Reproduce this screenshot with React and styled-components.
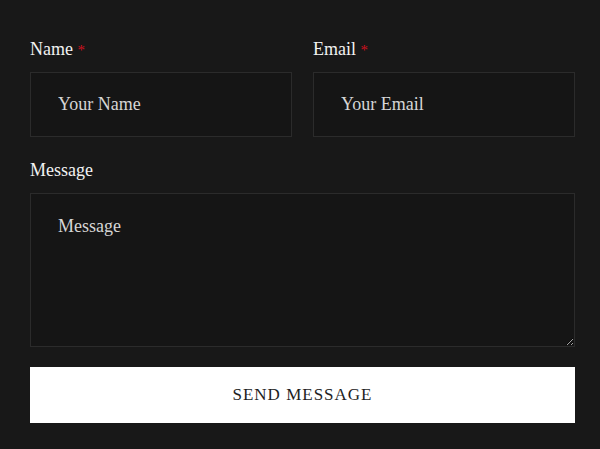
import React from 'react';
import styled, {createGlobalStyle} from 'styled-components';

const Global = createGlobalStyle`
  html, body {
    margin: 0;
    background: #181818;
  }
  * { box-sizing: border-box; }
`;

const App = () => {
    return (
        <>
            <Global />
            <Form onSubmit={e => e.preventDefault()}>
                <Row>
                    <Field>
                        <Label>Name <Req>*</Req></Label>
                        <Input placeholder="Your Name" />
                    </Field>
                    <Field>
                        <Label>Email <Req>*</Req></Label>
                        <Input placeholder="Your Email" />
                    </Field>
                </Row>
                <Field>
                    <Label>Message</Label>
                    <TextArea placeholder="Message" />
                </Field>
                <Button type="submit">SEND MESSAGE</Button>
            </Form>
        </>
    );
};

const Form = styled.form`
display: flex;
flex-direction: column;
gap: 20px;
width: 545px;
margin-left: 30px;
padding-top: 36px;
font-family: "Liberation Serif", serif;
`;

const Row = styled.div`
display: grid;
grid-template-columns: 1fr 1fr;
column-gap: 21px;
`;

const Field = styled.div`
display: flex;
flex-direction: column;
`;

const Label = styled.label`
display: block;
height: 24px;
padding-top: 1px;
font-size: 18px;
line-height: 24px;
color: #f2f2f2;
margin-bottom: 12px;
`;

const Req = styled.span`
color: #d0101e;
font-size: 15px;
line-height: 0;
`;

const fieldStyles = `
width: 100%;
background: #151515;
border: 1px solid #2b2b2b;
color: #e6e6e6;
font-family: "Liberation Serif", serif;
font-size: 18px;
outline: none;
&::placeholder {
  color: #d6d6d6;
  opacity: 1;
}
`;

const Input = styled.input`
${fieldStyles}
height: 65px;
padding: 0 27px;
`;

const TextArea = styled.textarea`
${fieldStyles}
height: 154px;
padding: 21px 27px;
line-height: 22px;
resize: vertical;
`;

const Button = styled.button`
height: 56px;
background: #ffffff;
border: none;
color: #1e1e1e;
font-family: "Liberation Serif", serif;
font-size: 17px;
letter-spacing: 1px;
cursor: pointer;
`;

export default App;
